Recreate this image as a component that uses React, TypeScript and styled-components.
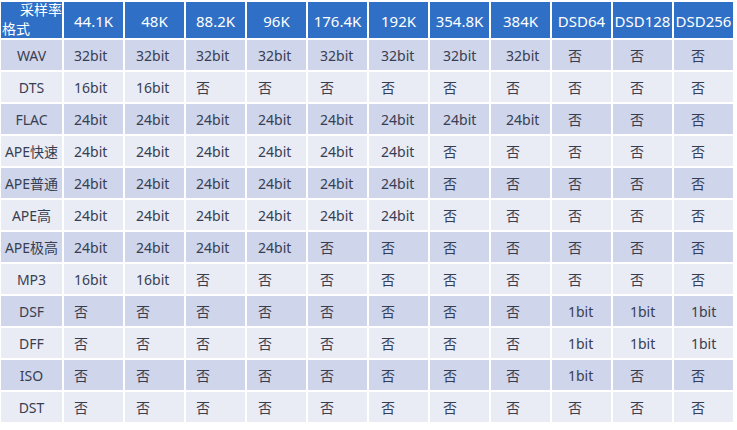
import React from "react";
import styled, { createGlobalStyle } from "styled-components";

const GlobalStyle = createGlobalStyle`
  html, body {
    margin: 0;
    padding: 0;
    background: #ffffff;
  }
  body {
    font-family: "Noto Sans", "Noto Sans CJK SC", sans-serif;
  }
`;

const Page = styled.div`
  padding: 2px 0 0 1px;
  width: 737px;
  height: 430px;
  box-sizing: border-box;
  overflow: hidden;
`;

const Grid = styled.div`
  display: grid;
  grid-template-columns: 61px repeat(11, 59px);
  grid-template-rows: 36px repeat(12, 30px);
  gap: 2px;
`;

const HeadCell = styled.div`
  background: #2f6fc6;
  color: #ffffff;
  font-size: 15px;
  display: flex;
  align-items: center;
  justify-content: center;
  white-space: nowrap;
  padding-top: 2px;
  box-sizing: border-box;
`;

const CornerCell = styled.div`
  background: #2f6fc6;
  color: #ffffff;
  font-size: 14px;
  line-height: 16px;
  display: flex;
  flex-direction: column;
  justify-content: space-between;
  white-space: nowrap;
  padding-bottom: 1px;
  box-sizing: border-box;
`;

const CornerTop = styled.span`
  align-self: flex-end;
`;

const CornerBottom = styled.span`
  align-self: flex-start;
  margin-left: 1px;
`;

const LabelCell = styled.div<{ $band: boolean }>`
  background: ${(p) => (p.$band ? "#cfd5ea" : "#e9ebf5")};
  color: #383e52;
  font-size: 14px;
  display: flex;
  align-items: center;
  justify-content: center;
  white-space: nowrap;
  overflow: hidden;
`;

const Cell = styled.div<{ $band: boolean; $pad: number }>`
  background: ${(p) => (p.$band ? "#cfd5ea" : "#e9ebf5")};
  color: #383e52;
  font-size: 14px;
  display: flex;
  align-items: center;
  justify-content: flex-start;
  padding-left: ${(p) => p.$pad}px;
  white-space: nowrap;
  box-sizing: border-box;
`;

const headers = [
  "44.1K",
  "48K",
  "88.2K",
  "96K",
  "176.4K",
  "192K",
  "354.8K",
  "384K",
  "DSD64",
  "DSD128",
  "DSD256",
];

const pads = [10, 11, 10, 11, 12, 12, 13, 15, 16, 17, 17];

const N = "否";
const rows: [string, string[]][] = [
  ["WAV", ["32bit", "32bit", "32bit", "32bit", "32bit", "32bit", "32bit", "32bit", N, N, N]],
  ["DTS", ["16bit", "16bit", N, N, N, N, N, N, N, N, N]],
  ["FLAC", ["24bit", "24bit", "24bit", "24bit", "24bit", "24bit", "24bit", "24bit", N, N, N]],
  ["APE快速", ["24bit", "24bit", "24bit", "24bit", "24bit", "24bit", N, N, N, N, N]],
  ["APE普通", ["24bit", "24bit", "24bit", "24bit", "24bit", "24bit", N, N, N, N, N]],
  ["APE高", ["24bit", "24bit", "24bit", "24bit", "24bit", "24bit", N, N, N, N, N]],
  ["APE极高", ["24bit", "24bit", "24bit", "24bit", N, N, N, N, N, N, N]],
  ["MP3", ["16bit", "16bit", N, N, N, N, N, N, N, N, N]],
  ["DSF", [N, N, N, N, N, N, N, N, "1bit", "1bit", "1bit"]],
  ["DFF", [N, N, N, N, N, N, N, N, "1bit", "1bit", "1bit"]],
  ["ISO", [N, N, N, N, N, N, N, N, "1bit", N, N]],
  ["DST", [N, N, N, N, N, N, N, N, N, N, N]],
];

export default function App() {
  return (
    <>
      <GlobalStyle />
      <Page>
        <Grid>
          <CornerCell>
            <CornerTop>采样率</CornerTop>
            <CornerBottom>格式</CornerBottom>
          </CornerCell>
          {headers.map((h) => (
            <HeadCell key={h}>{h}</HeadCell>
          ))}
          {rows.map(([label, vals], ri) => {
            const band = ri % 2 === 0;
            return (
              <React.Fragment key={label}>
                <LabelCell $band={band}>{label}</LabelCell>
                {vals.map((v, ci) => (
                  <Cell key={ci} $band={band} $pad={pads[ci]}>
                    {v}
                  </Cell>
                ))}
              </React.Fragment>
            );
          })}
        </Grid>
      </Page>
    </>
  );
}
